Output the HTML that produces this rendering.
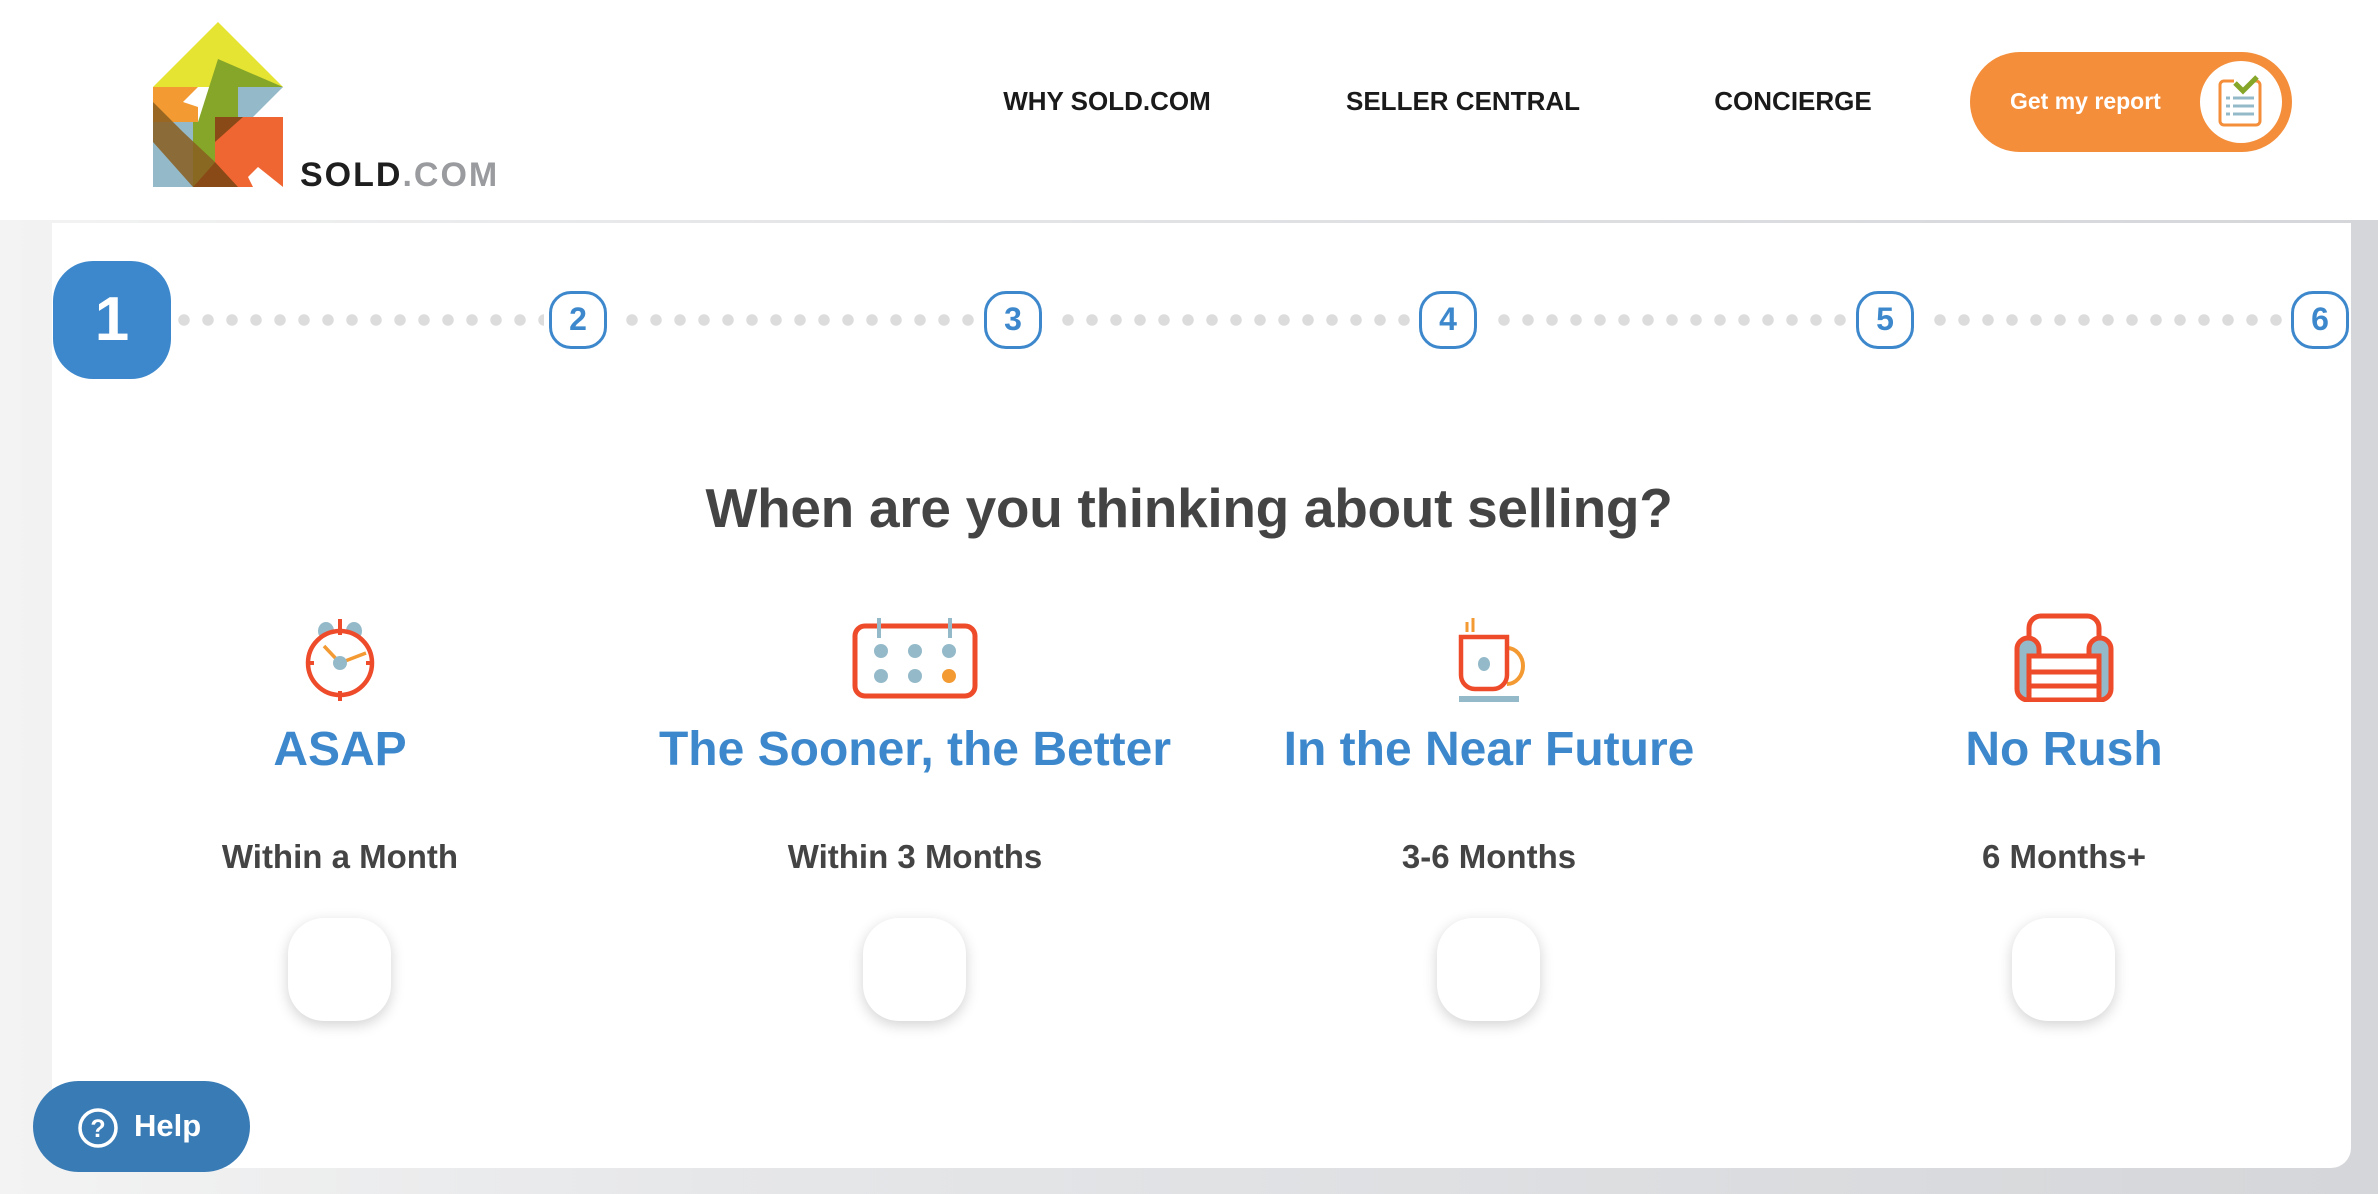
<!DOCTYPE html>
<html><head><meta charset="utf-8">
<style>
*{margin:0;padding:0;box-sizing:border-box}
body{width:2378px;height:1194px;overflow:hidden;background:linear-gradient(90deg,#f3f3f3,#e6e7e9 30%,#d4d6d9);font-family:"Liberation Sans",sans-serif;position:relative}
.header{position:absolute;left:0;top:0;width:2378px;height:220px;background:#fff}
.nav{position:absolute;top:86px;font-size:26px;font-weight:bold;color:#1a1a1a;transform:translateX(-50%);white-space:nowrap}
.btn{position:absolute;left:1970px;top:52px;width:322px;height:100px;border-radius:50px;background:#f48e3a}
.btn span{position:absolute;left:40px;top:36px;color:#fff;font-weight:bold;font-size:23px}
.btn .c{position:absolute;left:230px;top:9px;width:82px;height:82px;border-radius:50%;background:#fff}
.card{position:absolute;left:52px;top:223px;width:2299px;height:945px;background:#fff;border-radius:0 0 20px 20px}
.b1{position:absolute;left:53px;top:261px;width:118px;height:118px;border-radius:40px;background:#3d88cc;color:#fff;font-weight:bold;font-size:62px;text-align:center;line-height:118px}
.sc{position:absolute;top:291px;width:58px;height:58px;border:3.5px solid #3d88cc;border-radius:22px;color:#3d88cc;font-weight:bold;font-size:32px;text-align:center;line-height:51px;background:#fff}
.dots{position:absolute;top:314px;height:12px;background-image:radial-gradient(circle,#dcdcdc 5.5px,transparent 6px);background-size:24px 12px}
h1{position:absolute;left:0;width:2378px;top:476px;text-align:center;font-size:55px;color:#444;font-weight:bold;letter-spacing:-0.3px}
.col{position:absolute;width:600px;margin-left:-300px;text-align:center}
.col h2{position:absolute;top:722px;width:600px;font-size:48px;color:#3d88cc;font-weight:bold}
.col p{position:absolute;top:838px;width:600px;font-size:33px;color:#444;font-weight:bold}
.col .r{position:absolute;top:918px;left:248px;width:103px;height:103px;border-radius:36px;background:#fff;box-shadow:0 4px 14px rgba(0,0,0,.18)}
.col svg{position:absolute;top:612px;left:240px}
.help{position:absolute;left:33px;top:1081px;width:217px;height:91px;border-radius:46px;background:#387bb5;color:#fff;font-weight:bold;font-size:31px}
</style></head><body>
<div class="header">
<svg style="position:absolute;left:150px;top:22px" width="136" height="166" viewBox="0 0 130 166">
<polygon points="0,65 65,0 130,65" fill="#e6e433"/>
<polygon points="65,37 130,65 90,100 45,100" fill="#86a629"/>
<polygon points="0,65 45,65 45,100 0,100" fill="#f39a33"/>
<polygon points="85,65 130,65 100,95 85,95" fill="#94bac9"/>
<polygon points="0,100 40,100 40,165 0,165" fill="#94bac9"/>
<polygon points="40,100 62,100 62,165 40,165" fill="#86a629"/>
<polygon points="62,95 130,95 130,165 62,165" fill="#f06633"/>
<polygon points="0,80 30,110 62,140 40,165 0,120" fill="#8a5e20" opacity=".85"/>
<polygon points="62,120 90,95 62,95" fill="#8a4a18"/>
<polygon points="40,165 62,140 85,165" fill="#8a4a18"/>
<polygon points="30,80 45,65 45,85" fill="#fff"/>
<polygon points="105,145 130,165 100,165 95,155" fill="#fff"/>
</svg>
<div style="position:absolute;left:300px;top:156px;font-size:34px;font-weight:bold;letter-spacing:2px;color:#1e1e1e">SOLD<span style="color:#9a9b9e">.COM</span></div>
<div class="nav" style="left:1107px">WHY SOLD.COM</div>
<div class="nav" style="left:1463px">SELLER CENTRAL</div>
<div class="nav" style="left:1793px">CONCIERGE</div>
<div class="btn"><span>Get my report</span><div class="c">
<svg width="82" height="82" viewBox="0 0 82 82"><rect x="20" y="20" width="40" height="44" rx="4" fill="none" stroke="#f48e3a" stroke-width="3"/><rect x="34" y="16" width="20" height="10" fill="#fff"/><path d="M35 22l8 8 14-14" fill="none" stroke="#86a629" stroke-width="5"/><path d="M26 37h4M33 37h21M26 45h4M33 45h21M26 53h4M33 53h21" stroke="#94bac9" stroke-width="3"/></svg></div></div>
</div>
<div class="card"></div>
<div class="dots" style="left:172px;width:372px"></div>
<div class="dots" style="left:620px;width:360px"></div>
<div class="dots" style="left:1056px;width:360px"></div>
<div class="dots" style="left:1492px;width:360px"></div>
<div class="dots" style="left:1928px;width:360px"></div>
<div class="b1">1</div>
<div class="sc" style="left:549px">2</div>
<div class="sc" style="left:984px">3</div>
<div class="sc" style="left:1419px">4</div>
<div class="sc" style="left:1856px">5</div>
<div class="sc" style="left:2291px">6</div>
<h1>When are you thinking about selling?</h1>

<div class="col" style="left:340px">
<svg width="120" height="90" viewBox="0 0 120 90"><ellipse cx="46" cy="19" rx="8" ry="9" fill="#94bac9"/><ellipse cx="74" cy="19" rx="8" ry="9" fill="#94bac9"/><circle cx="60" cy="51" r="32" fill="#fff" stroke="#ee4b2b" stroke-width="4.5"/><path d="M60 7v16M60 79v10M28 51h6M86 51h6" stroke="#ee4b2b" stroke-width="4"/><path d="M44 34l16 17 26-10" fill="none" stroke="#f39a33" stroke-width="3.5"/><circle cx="60" cy="51" r="7" fill="#94bac9"/></svg>
<h2>ASAP</h2><p>Within a Month</p><div class="r"></div></div>

<div class="col" style="left:915px">
<svg width="130" height="90" viewBox="0 0 130 90" style="left:235px"><rect x="5" y="14" width="120" height="70" rx="10" fill="none" stroke="#ee4b2b" stroke-width="5"/><path d="M29 6v20M100 6v20" stroke="#94bac9" stroke-width="4"/><g fill="#94bac9"><circle cx="31" cy="39" r="7"/><circle cx="65" cy="39" r="7"/><circle cx="99" cy="39" r="7"/><circle cx="31" cy="64" r="7"/><circle cx="65" cy="64" r="7"/></g><circle cx="99" cy="64" r="7" fill="#f39a33"/></svg>
<h2>The Sooner, the Better</h2><p>Within 3 Months</p><div class="r"></div></div>

<div class="col" style="left:1489px">
<svg width="120" height="90" viewBox="0 0 120 90"><path d="M38 10v10M44 6v14" stroke="#f39a33" stroke-width="3"/><path d="M78 36a16 18 0 0 1 0 36" fill="none" stroke="#f39a33" stroke-width="4"/><path d="M32 25h46v38a14 14 0 0 1-14 14h-18a14 14 0 0 1-14-14z" fill="none" stroke="#ee4b2b" stroke-width="4.5"/><ellipse cx="55" cy="52" rx="6" ry="7" fill="#94bac9"/><rect x="30" y="84" width="60" height="6" fill="#94bac9"/></svg>
<h2>In the Near Future</h2><p>3-6 Months</p><div class="r"></div></div>

<div class="col" style="left:2064px">
<svg width="130" height="90" viewBox="0 0 130 90" style="left:235px"><path d="M30 36v-20a12 12 0 0 1 12-12h46a12 12 0 0 1 12 12v20" fill="none" stroke="#ee4b2b" stroke-width="5"/><rect x="18" y="26" width="22" height="62" rx="11" fill="#94bac9" stroke="#ee4b2b" stroke-width="5"/><rect x="90" y="26" width="22" height="62" rx="11" fill="#94bac9" stroke="#ee4b2b" stroke-width="5"/><rect x="30" y="44" width="70" height="44" fill="#fff" stroke="#ee4b2b" stroke-width="5"/><path d="M30 60h70M30 74h70" stroke="#ee4b2b" stroke-width="5"/></svg>
<h2>No Rush</h2><p>6 Months+</p><div class="r"></div></div>

<div class="help">
<svg style="position:absolute;left:44px;top:26px" width="42" height="42" viewBox="0 0 42 42"><circle cx="21" cy="21" r="18" fill="none" stroke="#fff" stroke-width="3.5"/><text x="21" y="30" text-anchor="middle" font-family="Liberation Sans" font-weight="bold" font-size="25" fill="#fff">?</text></svg>
<span style="position:absolute;left:101px;top:27px">Help</span></div>
</body></html>
